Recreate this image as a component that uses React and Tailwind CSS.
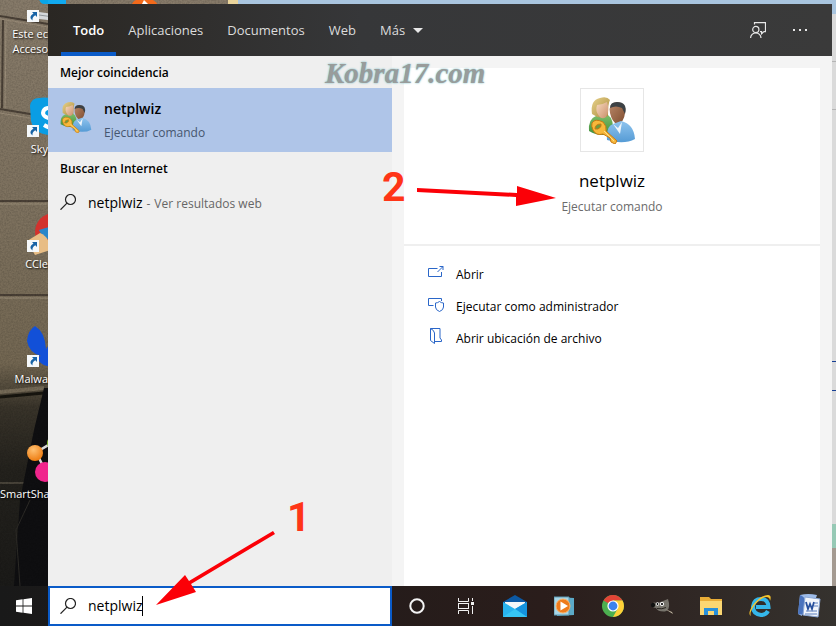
import { useState } from "react";

const tabs = ["Todo", "Aplicaciones", "Documentos", "Web"];

const desktopItems = [
  { lines: ["Este ec", "Acceso"], Icon: PcIcon, shortcut: true },
  { lines: ["Sky"], Icon: SkypeIcon, shortcut: true },
  { lines: ["CCle"], Icon: CCleanerIcon, shortcut: true },
  { lines: ["Malwa"], Icon: MalwareIcon, shortcut: true },
  { lines: ["SmartSha"], Icon: SmartShareIcon, shortcut: false },
];

const actions = [
  { label: "Abrir", Icon: OpenIcon },
  { label: "Ejecutar como administrador", Icon: AdminIcon },
  { label: "Abrir ubicación de archivo", Icon: LocationIcon },
];

const taskbarApps = [
  { name: "Cortana", Icon: CortanaIcon },
  { name: "Vista de tareas", Icon: TaskViewIcon },
  { name: "Correo", Icon: MailIcon },
  { name: "Reproductor multimedia", Icon: PlayerIcon },
  { name: "Chrome", Icon: ChromeIcon },
  { name: "GIMP", Icon: GimpIcon },
  { name: "Explorador de archivos", Icon: FolderIcon },
  { name: "Internet Explorer", Icon: ExplorerIcon },
  { name: "Word", Icon: WordIcon },
];

function Wallpaper() {
  return (
    <svg
      className="absolute inset-0 h-full w-full"
      viewBox="0 0 836 626"
      preserveAspectRatio="xMinYMin slice"
      aria-hidden="true"
    >
      <defs>
        <linearGradient id="stone" x1="0" y1="0" x2="0" y2="1">
          <stop offset="0" stopColor="#877b6a" />
          <stop offset="0.35" stopColor="#7d715e" />
          <stop offset="0.58" stopColor="#736752" />
          <stop offset="0.65" stopColor="#39342a" />
          <stop offset="0.75" stopColor="#24221d" />
          <stop offset="1" stopColor="#181817" />
        </linearGradient>
        <filter id="grain" x="0" y="0" width="100%" height="100%">
          <feTurbulence type="fractalNoise" baseFrequency="0.6" numOctaves="2" />
          <feColorMatrix values="0 0 0 0 0  0 0 0 0 0  0 0 0 0 0  0.9 0 0 0 -0.3" />
        </filter>
      </defs>
      <rect width="836" height="626" fill="url(#stone)" />
      <path d="M0 16L48 24M0 109L48 117M0 201H48M0 295H48M3 20L2 108" stroke="#4a4036" strokeWidth="2" />
      <path d="M0 19L48 27M0 113L48 121M0 204H48M0 298H48M6 22L5 108" stroke="#9a8d79" strokeWidth="1" />
      <path d="M0 392L44 388" stroke="#756a57" strokeWidth="4" />
      <path d="M0 397L44 393" stroke="#17150f" strokeWidth="3" />
      <path d="M0 483H24" stroke="#49443a" strokeWidth="2" />
      <path d="M44 388L34 430L20 500L14 586H48V388z" fill="#0f0f11" />
      <path d="M30 500L16 530L20 586" stroke="#2d2b27" fill="none" />
      <rect width="240" height="626" filter="url(#grain)" opacity="0.3" />
      <rect x="48" width="18" height="6" fill="#11aaf0" />
      <path d="M131 6q2-5 5-6h17q4 2 5 6z" fill="#f26a1b" />
      <path d="M141 6l3-6 6 6z" fill="#fff" />
      <rect x="228" width="10" height="6" fill="#e9d39a" />
      <rect x="238" width="598" height="18" fill="#a9c5df" />
    </svg>
  );
}

function ShortcutBadge() {
  return (
    <svg className="absolute bottom-1 left-0 h-3 w-3" viewBox="0 0 12 12" aria-hidden="true">
      <rect width="12" height="12" fill="#f5f8fa" />
      <path d="M5 2h5v5L8.300 5.300Q5 7 5.500 10.500Q.8 7 6.500 3.600z" fill="#1763a6" />
    </svg>
  );
}

function PcIcon() {
  return (
    <svg className="h-12 w-12" viewBox="0 0 48 48" aria-hidden="true">
      <path d="M12 20h36v6H17q-4 0-5-6z" fill="#08a5e8" />
      <path d="M12 34l36 5v6l-36-4z" fill="#d6d9db" />
      <path d="M12 37l36 5" stroke="#90979b" />
    </svg>
  );
}

function SkypeIcon() {
  return (
    <svg className="h-12 w-12" viewBox="0 0 48 48" aria-hidden="true">
      <path d="M3 13Q4 5 12 5Q20 3 30 8Q46 14 44 32Q42 46 27 42Q8 43 4 28z" fill="#0a9de4" />
      <path d="M29 17q-12-5-13 3q0 4 9 6q8 2 6 6q-4 6-14 0" fill="none" stroke="#fff" strokeWidth="4" />
    </svg>
  );
}

function CCleanerIcon() {
  return (
    <svg className="h-12 w-12" viewBox="0 0 48 48" aria-hidden="true">
      <circle cx="27" cy="24" r="19" fill="#d3322d" />
      <path d="M12 22l10-3 5 10-10 3z" fill="#2a86c9" />
      <path d="M0 33L13 25Q23 29 23 42L8 47z" fill="#e8bd85" />
    </svg>
  );
}

function MalwareIcon() {
  return (
    <svg className="h-12 w-12" viewBox="0 0 48 48" aria-hidden="true">
      <path d="M0 18Q1 7 8 3Q18 9 19 26L28 14Q36 8 44 10L40 32Q32 46 20 43Q13 42 10 34L14 33Q2 30 0 18z" fill="#1250d8" />
    </svg>
  );
}

function SmartShareIcon() {
  return (
    <svg className="h-12 w-12" viewBox="0 0 48 48" aria-hidden="true">
      <defs>
        <radialGradient id="ball" cx="0.4" cy="0.3" r="0.7">
          <stop offset="0" stopColor="#ffc071" />
          <stop offset="1" stopColor="#ee7d12" />
        </radialGradient>
      </defs>
      <path d="M8 15L23 6M9 14L18 32" stroke="#d9d9d9" strokeWidth="2.500" />
      <circle cx="27" cy="5" r="7" fill="#7fb92e" />
      <circle cx="8" cy="15" r="8" fill="url(#ball)" />
      <circle cx="18" cy="34" r="10" fill="#f0258c" />
    </svg>
  );
}

function UsersIcon({ className }) {
  return (
    <svg className={className} viewBox="0 0 48 48" aria-hidden="true">
      <defs>
        <linearGradient id="hair" x1="0" y1="0" x2="1" y2="1">
          <stop offset="0" stopColor="#e8d28b" />
          <stop offset="1" stopColor="#a98a3c" />
        </linearGradient>
        <linearGradient id="face" x1="0" y1="0" x2="1" y2="1">
          <stop offset="0" stopColor="#f7d9bd" />
          <stop offset="1" stopColor="#c98f6b" />
        </linearGradient>
        <linearGradient id="green" x1="0" y1="0" x2="0" y2="1">
          <stop offset="0" stopColor="#7dbd69" />
          <stop offset="1" stopColor="#3f8f3a" />
        </linearGradient>
        <linearGradient id="skin" x1="0" y1="0" x2="1" y2="1">
          <stop offset="0" stopColor="#b98768" />
          <stop offset="1" stopColor="#7f4d2f" />
        </linearGradient>
        <linearGradient id="shirt" x1="0" y1="0" x2="0" y2="1">
          <stop offset="0" stopColor="#8fc4ee" />
          <stop offset="1" stopColor="#559bd5" />
        </linearGradient>
      </defs>
      <path d="M1 35Q0 23 8 20L20 19Q26 23 25 37Q12 42 1 35z" fill="url(#green)" />
      <path d="M4 18Q2 4 12 2Q19 0 22 4Q20 7 20 20Q12 24 4 18z" fill="url(#hair)" />
      <path d="M9 9Q14 9 19 6Q22 15 18 21Q14 24 11 20Q7 15 9 9z" fill="url(#face)" />
      <path d="M22 17Q20 7 29 6Q39 7 37 17Q36 27 29 28Q24 26 22 17z" fill="url(#skin)" />
      <path d="M22 12Q22 6 29 6Q40 6 37 18L34 12Q28 9 22 12z" fill="#3c4145" />
      <path d="M19 44Q18 30 25 28L33 25Q46 28 47 43Q36 49 19 44z" fill="url(#shirt)" />
      <path d="M25 28l5 4 4-6-2 12z" fill="#eef5fa" />
      <path d="M4 27Q7 22 15 26Q19 30 18 35L29 45L27 48L23 46L22 42L15 38Q8 40 5 34Q3 30 4 27z" fill="#f7b83b" stroke="#c77a12" />
      <path d="M7 33Q7 28 13 28Q14 31 10 33z" fill="#6f9a3f" stroke="#c77a12" />
      <path d="M16 35L26 45" stroke="#fbe08a" />
    </svg>
  );
}

function SearchIcon() {
  return (
    <svg className="h-4 w-4 shrink-0" viewBox="0 0 16 16" fill="none" stroke="#222" aria-hidden="true">
      <circle cx="10.500" cy="5.500" r="5" strokeWidth="1.200" />
      <path d="M7 9.200L.5 15.700" strokeWidth="1.200" />
    </svg>
  );
}

function FeedbackIcon() {
  return (
    <svg className="h-4 w-4" viewBox="0 0 16 16" fill="none" stroke="#e8e8e8" strokeWidth="1.200" aria-hidden="true">
      <path d="M4.500 2.500V.6h11v9H14l-2.400 2V9.600H10" />
      <circle cx="5.800" cy="7.500" r="3.100" />
      <path d="M.6 16a5.200 5.200 0 0 1 10.400 0" />
    </svg>
  );
}

function MoreIcon() {
  return (
    <svg className="h-4 w-4" viewBox="0 0 16 16" fill="#e8e8e8" aria-hidden="true">
      <path d="M1 7h2v2H1zM7 7h2v2H7zM13 7h2v2h-2z" />
    </svg>
  );
}

function OpenIcon() {
  return (
    <svg className="h-4 w-4" viewBox="0 0 16 16" fill="none" stroke="#2a66c8" aria-hidden="true">
      <path d="M9.500 2.500H.5v8h13V6M9.500 6L15 .5M11.500.5H15v3.500" />
    </svg>
  );
}

function AdminIcon() {
  return (
    <svg className="h-4 w-4" viewBox="0 0 16 16" fill="none" stroke="#2a66c8" aria-hidden="true">
      <path d="M5.500 7.500H.5v-7h13v2.500" />
      <path d="M11.500 3.500Q9.500 5 7.500 5v4q0 3 4 4.500q4-1.500 4-4.500V5q-2 0-4-1.500z" />
    </svg>
  );
}

function LocationIcon() {
  return (
    <svg className="h-4 w-4 overflow-visible" viewBox="0 0 16 16" fill="none" stroke="#2a66c8" aria-hidden="true">
      <path d="M2.500-1.500H12v9.500l1.500 2v1.500H6.500M2.500-1.500V10.500L6.500 13.500V3Q6 0 2.500-1.500z" />
    </svg>
  );
}

function StartIcon() {
  return (
    <svg className="h-4 w-4" viewBox="0 0 16 16" fill="#fff" aria-hidden="true">
      <path d="M0 2.200L6.600 1.300V7.600H0zM7.400 1.200L16 0V7.600H7.400zM0 8.400H6.600V14.700L0 13.800zM7.400 8.400H16V16L7.400 14.800z" />
    </svg>
  );
}

function CortanaIcon() {
  return (
    <svg className="h-4 w-4" viewBox="0 0 16 16" aria-hidden="true">
      <circle cx="8" cy="8" r="6.700" fill="none" stroke="#f4f4f4" strokeWidth="2" />
    </svg>
  );
}

function TaskViewIcon() {
  return (
    <svg className="h-4 w-4" viewBox="0 0 16 16" fill="none" stroke="#f0f0f0" aria-hidden="true">
      <path d="M.5 0v3.500h10V0M.5 16v-3.500h10V16M.5 5v6M10.500 5v6M.5 5.500h10M.5 10.500h10M14.500 0v3M14.500 8v8" />
      <path d="M13 4h3v3h-3z" fill="#f0f0f0" stroke="none" />
    </svg>
  );
}

function MailIcon() {
  return (
    <svg className="h-6 w-6" viewBox="0 0 24 24" aria-hidden="true">
      <path d="M0 8L12 1L24 8V12H0z" fill="#0c59a4" />
      <path d="M2 8h20v8H2z" fill="#f4f7f9" />
      <path d="M0 8L12 15L24 8V23H0z" fill="#28b3ee" />
      <path d="M12 15L24 8V23z" fill="#1493df" />
      <path d="M0 23L12 15L24 23z" fill="#36c5f4" />
    </svg>
  );
}

function PlayerIcon() {
  return (
    <svg className="h-5 w-5" viewBox="0 0 20 20" aria-hidden="true">
      <path d="M3 1L20 2V19L3 20z" fill="#5caac8" />
      <path d="M0 1h15v18H0z" fill="#a9d6e6" stroke="#5d9bb5" />
      <circle cx="9" cy="10" r="7" fill="#ee7b1c" stroke="#f9b36d" />
      <path d="M6.500 5.500v9L14 10z" fill="#fff" />
    </svg>
  );
}

function ChromeIcon() {
  return (
    <svg className="h-6 w-6" viewBox="0 0 24 24" aria-hidden="true">
      <circle cx="12" cy="12" r="11" fill="#4caf50" />
      <path d="M12 12L2.500 6.500A11 11 0 0 1 21.500 6.500H12z" fill="#e24436" />
      <path d="M12 12L12 6.500H21.500A11 11 0 0 1 12 23L16.800 14.500z" fill="#ffd038" />
      <circle cx="12" cy="12" r="5.600" fill="#fff" />
      <circle cx="12" cy="12" r="4.400" fill="#3b83ee" />
    </svg>
  );
}

function GimpIcon() {
  return (
    <svg className="h-6 w-6" viewBox="0 0 24 24" aria-hidden="true">
      <path d="M4 8.500L8 9L18 5L19 9Q20 16 15 17.500Q8 18 6 14Q1 13 1 10z" fill="#77746c" />
      <circle cx="3" cy="11" r="2.200" fill="#111" />
      <circle cx="7.500" cy="10" r="1.700" fill="#fff" />
      <circle cx="12" cy="10" r="2.100" fill="#fff" />
      <circle cx="7.500" cy="10" r="0.900" />
      <circle cx="12" cy="10" r="1.100" />
      <path d="M7 14.500q5 1 9-1" stroke="#28241f" fill="none" />
      <path d="M15 15L22 18L23 20z" fill="#c3b9a5" />
    </svg>
  );
}

function FolderIcon() {
  return (
    <svg className="h-6 w-6" viewBox="0 0 24 24" aria-hidden="true">
      <path d="M1 3h9l2 2h11v16H1z" fill="#e9ad37" />
      <path d="M1 7h22v14H1z" fill="#fbd772" />
      <path d="M5 21v-7h14v7h-4v-4H9v4z" fill="#2890da" />
    </svg>
  );
}

function ExplorerIcon() {
  return (
    <svg className="h-6 w-6" viewBox="0 0 24 24" fill="none" aria-hidden="true">
      <path d="M20 17Q18 21 13 21Q5 20 5 12.500Q6 5 13 5Q20 5 20.500 13H8" stroke="#35b7ea" strokeWidth="4" />
      <path d="M3 22Q-1 20 5 11Q13 1 20 1Q24 1 22 7Q22 3 18 3Q12 4 6 12Q1 19 3 22z" fill="#f8c42b" />
    </svg>
  );
}

function WordIcon() {
  return (
    <svg className="h-6 w-6" viewBox="0 0 24 24" aria-hidden="true">
      <path d="M3 1Q11-1 20 1L19 4L9 5L5 22L1 20z" fill="#9dbbe8" />
      <path d="M3 1Q12 4 9 21L1 20z" fill="#4a73bd" />
      <path d="M8 3L23 5L21 23L6 21z" fill="#f1f5fb" stroke="#8ca8d5" />
      <path d="M9 8l2 7 2-5 2 5 2-7" stroke="#264f9d" strokeWidth="1.800" fill="none" />
      <path d="M17 9h4M17 12h4M9 17h11M8 20h12" stroke="#5b7fbd" />
    </svg>
  );
}

function DesktopItem({ item }) {
  const { Icon, lines, shortcut } = item;
  return (
    <li className="flex h-[115px] flex-col">
      <div className="ml-[27px] w-[21px] overflow-hidden">
        <div className="relative h-12 w-12">
          <Icon />
          {shortcut ? <ShortcutBadge /> : null}
        </div>
      </div>
      <p className="text-right text-[11px] leading-[15px] text-white [text-shadow:1px_1px_2px_#000]">
        {lines.map((line) => (
          <span key={line} className="block whitespace-nowrap">
            {line}
          </span>
        ))}
      </p>
    </li>
  );
}

function SearchHeader({ active, onSelect }) {
  return (
    <header className="flex h-[52px] items-stretch bg-linear-to-r from-[#2a2723] via-[#363739] via-40% to-[#3a3a3a] pl-[13px] text-[#dcdcdc]">
      <nav className="flex text-[13px] leading-5">
        {tabs.map((tab) => (
          <button
            key={tab}
            type="button"
            onClick={() => onSelect(tab)}
            className={
              tab === active
                ? "border-y-4 border-t-transparent border-b-[#0a5bc8] px-3 font-semibold text-white"
                : "border-y-4 border-transparent px-3"
            }
          >
            {tab}
          </button>
        ))}
        <button type="button" className="flex items-center gap-2 px-3">
          Más
          <svg className="h-[5px] w-[10px]" viewBox="0 0 10 5" fill="#e8e8e8" aria-hidden="true">
            <path d="M0 0h10L5 5z" />
          </svg>
        </button>
      </nav>
      <div className="ml-auto flex items-center pr-4">
        <button type="button" aria-label="Comentarios" className="px-[13px]">
          <FeedbackIcon />
        </button>
        <button type="button" aria-label="Opciones" className="px-[13px] pr-2">
          <MoreIcon />
        </button>
      </div>
    </header>
  );
}

function ResultList({ query }) {
  return (
    <section className="w-[344px] shrink-0 bg-[#efefef]">
      <h2 className="flex h-8 items-center px-3 pt-px text-[12px] font-semibold">Mejor coincidencia</h2>
      <button type="button" className="flex h-16 w-full items-center gap-3 bg-[#afc5e8] px-3 pt-px text-left">
        <UsersIcon className="-mt-2 h-8 w-8" />
        <span className="flex flex-col gap-1">
          <span className="text-[14px] leading-5 font-semibold">{query}</span>
          <span className="text-[12px] leading-5 text-[#46566f]">Ejecutar comando</span>
        </span>
      </button>
      <h2 className="flex h-8 items-center px-3 pt-px text-[12px] font-semibold">Buscar en Internet</h2>
      <button type="button" className="flex h-9 w-full items-center gap-3 px-3 text-left">
        <SearchIcon />
        <span className="flex items-baseline gap-1 text-[12px] text-[#666]">
          <span className="text-[14px] text-black">{query}</span>
          <span>-</span>
          <span>Ver resultados web</span>
        </span>
      </button>
    </section>
  );
}

function DetailCard({ query }) {
  return (
    <section className="min-w-0 flex-1 px-3 pt-3">
      <div className="h-full bg-white">
        <div className="flex h-[178px] flex-col items-center border-b-2 border-[#efefef] pt-5">
          <div className="flex h-16 w-16 items-center justify-center border border-[#e6e6e6]">
            <UsersIcon className="h-12 w-12" />
          </div>
          <h1 className="mt-[17px] text-[17px] leading-6">{query}</h1>
          <p className="mt-1 text-[12px] leading-5 text-[#6b6b6b]">Ejecutar comando</p>
        </div>
        <ul className="pt-3">
          {actions.map(({ label, Icon }) => (
            <li key={label}>
              <button type="button" className="flex h-8 w-full items-center gap-3 px-6 text-left text-[12px]">
                <Icon />
                <span className="pt-px">{label}</span>
              </button>
            </li>
          ))}
        </ul>
      </div>
    </section>
  );
}

// Sliver of the window that stays open behind the search panel
function BackWindow() {
  return (
    <div className="mt-[14px] flex w-1 shrink-0 flex-col bg-[#dadada]">
      <div className="h-12 border-b border-[#b5b5b5]" />
      <div className="h-12 border-b border-[#b5b5b5]" />
      <div className="h-[251px]" />
      <div className="h-[30px] border-y border-[#173f94]" />
      <div className="h-[133px]" />
      <div className="h-6 bg-[#96c9b5]" />
      <div className="flex-1 bg-[#a49a91]" />
    </div>
  );
}

function Taskbar({ query, onChange }) {
  return (
    <footer className="relative flex h-10 shrink-0 bg-linear-to-r from-[#191919] via-[#2a1d1b] via-65% to-[#35322e]">
      <button type="button" aria-label="Inicio" className="flex w-12 items-center justify-center">
        <StartIcon />
      </button>
      <label className="flex w-[344px] items-center gap-3 border-2 border-[#0a5bc8] bg-white px-[10px]">
        <SearchIcon />
        <span className="flex items-center">
          <input
            aria-label="Buscar"
            value={query}
            onChange={(e) => onChange(e.target.value)}
            className="field-sizing-content text-[14px] leading-5 text-black caret-transparent outline-none"
          />
          <span className="h-5 w-px bg-black" />
        </span>
      </label>
      <div className="flex">
        {taskbarApps.map(({ name, Icon }) => (
          <button key={name} type="button" aria-label={name} className="flex w-[49px] items-center justify-center">
            <Icon />
          </button>
        ))}
      </div>
    </footer>
  );
}

function Annotations() {
  return (
    <div className="pointer-events-none absolute inset-0">
      <p className="absolute top-[53px] left-[325px] font-['Liberation_Serif',serif] text-[29px] leading-10 font-bold text-[#999c9b] italic [text-shadow:0_0_2px_#5fb4be]">
        Kobra17.com
      </p>
      <p className="absolute top-[164px] left-[382px] font-[Roboto,sans-serif] text-[41px] leading-[46px] font-bold text-[#ff3517]">
        2
      </p>
      <svg className="absolute top-[184px] left-[416px] h-6 w-[140px]" viewBox="0 0 140 24" fill="#fb0007" aria-hidden="true">
        <path d="M1 4L101 9V2L140 14L100 22V13L1 8z" />
      </svg>
      <p className="absolute bottom-[86px] left-[287px] font-[Roboto,sans-serif] text-[41px] leading-[46px] font-bold text-[#ff3517]">
        1
      </p>
      <svg className="absolute bottom-[20px] left-[156px] h-[76px] w-[120px]" viewBox="0 0 120 76" fill="#fb0007" aria-hidden="true">
        <path d="M117 1L119 4L35 54L40 62L0 75L29 45L33 51z" />
      </svg>
    </div>
  );
}

export default function App() {
  const [query, setQuery] = useState("netplwiz");
  const [activeTab, setActiveTab] = useState("Todo");

  return (
    <div className="relative flex min-h-screen flex-col overflow-hidden bg-[#191919] font-['Open_Sans',sans-serif] text-black">
      <Wallpaper />
      <div className="relative flex flex-1">
        <ul className="-mt-[22px] w-12 shrink-0">
          {desktopItems.map((item) => (
            <DesktopItem key={item.lines[0]} item={item} />
          ))}
        </ul>
        <main className="mt-1 flex min-w-0 flex-1 flex-col bg-[#f4f4f4]">
          <SearchHeader active={activeTab} onSelect={setActiveTab} />
          <div className="flex flex-1">
            <ResultList query={query} />
            <DetailCard query={query} />
          </div>
        </main>
        <BackWindow />
      </div>
      <Taskbar query={query} onChange={setQuery} />
      <Annotations />
    </div>
  );
}
